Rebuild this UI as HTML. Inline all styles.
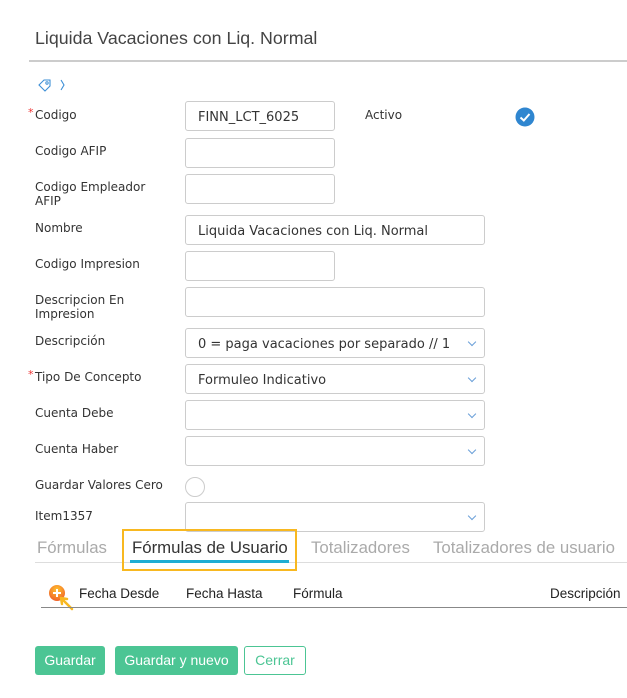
<!DOCTYPE html>
<html><head><meta charset="utf-8"><style>
body{margin:0;width:627px;height:698px;background:#fff;position:relative;overflow:hidden;font-family:"DejaVu Sans","Liberation Sans",sans-serif;color:#333}
.a{position:absolute}
.lbl{position:absolute;left:35px;font-size:12px;color:#333;line-height:14px}
.in{position:absolute;left:185px;height:28px;border:1px solid #ccc;border-radius:3px;background:#fff;font-size:13px;line-height:32px;padding-left:12px;box-sizing:content-box;color:#333}
.s{width:136px}.l{width:286px}
.chev{position:absolute;right:9px;top:10px;width:5px;height:5px;border-right:1.2px solid #6a9fd8;border-bottom:1.2px solid #6a9fd8;transform:rotate(45deg)}
.tab{position:absolute;top:538px;font-family:"Liberation Sans",sans-serif;font-size:16.8px;color:#aaa}
.th{position:absolute;top:586px;font-family:"Liberation Sans",sans-serif;font-size:13.5px;color:#222}
.btn{position:absolute;top:646px;height:29px;border-radius:3px;font-family:"Liberation Sans",sans-serif;font-size:14px;line-height:29px;text-align:center;color:#fff;background:#4cc594}
</style></head><body>
<div class="a" style="left:35px;top:28px;font-family:'Liberation Sans',sans-serif;font-size:17.8px;color:#444">Liquida Vacaciones con Liq. Normal</div>
<div class="a" style="left:29px;top:60px;width:598px;height:2px;background:#ccc"></div>
<svg class="a" style="left:36px;top:77px" width="30" height="16"><path d="M3 8 L8 3 L14 3 L14 9 L9 14 Z" fill="none" stroke="#3d8fd6" stroke-width="1.1"/><circle cx="11" cy="6" r="1.2" fill="none" stroke="#3d8fd6"/><path d="M25 3 L28 8 L25 13" fill="none" stroke="#3d8fd6" stroke-width="1.1"/></svg>
<div class="a" style="left:28px;top:106px;color:#e33;font-size:11px">*</div>
<div class="lbl" style="top:108px">Codigo</div>
<div class="in s" style="top:101px">FINN_LCT_6025</div>
<div class="a" style="left:365px;top:108px;font-size:12px">Activo</div>
<svg class="a" style="left:515px;top:107px" width="20" height="20"><circle cx="10" cy="10" r="9.5" fill="#2f86d0"/><path d="M5.5 10.5 L8.8 13.5 L14.5 7" fill="none" stroke="#fff" stroke-width="2"/></svg>
<div class="lbl" style="top:144px">Codigo AFIP</div>
<div class="in s" style="top:138px"></div>
<div class="lbl" style="top:180px">Codigo Empleador<br>AFIP</div>
<div class="in s" style="top:174px"></div>
<div class="lbl" style="top:221px">Nombre</div>
<div class="in l" style="top:215px">Liquida Vacaciones con Liq. Normal</div>
<div class="lbl" style="top:257px">Codigo Impresion</div>
<div class="in s" style="top:251px"></div>
<div class="lbl" style="top:293px">Descripcion En<br>Impresion</div>
<div class="in l" style="top:287px"></div>
<div class="lbl" style="top:334px">Descripción</div>
<div class="in l" style="top:328px;overflow:hidden;white-space:nowrap">0 = paga vacaciones por separado // 1<div class="chev"></div></div>
<div class="a" style="left:28px;top:368px;color:#e33;font-size:11px">*</div>
<div class="lbl" style="top:370px">Tipo De Concepto</div>
<div class="in l" style="top:364px">Formuleo Indicativo<div class="chev"></div></div>
<div class="lbl" style="top:406px">Cuenta Debe</div>
<div class="in l" style="top:400px"><div class="chev"></div></div>
<div class="lbl" style="top:442px">Cuenta Haber</div>
<div class="in l" style="top:436px"><div class="chev"></div></div>
<div class="lbl" style="top:478px">Guardar Valores Cero</div>
<div class="a" style="left:185px;top:477px;width:18px;height:18px;border:1px solid #ccc;border-radius:50%"></div>
<div class="lbl" style="top:509px">Item1357</div>
<div class="in l" style="top:502px"><div class="chev"></div></div>
<div class="a" style="left:35px;top:562px;width:592px;height:1px;background:#ddd"></div>
<div class="tab" style="left:37px">Fórmulas</div>
<div class="tab" style="left:132px;color:#333">Fórmulas de Usuario</div>
<div class="a" style="left:130px;top:560px;width:159px;height:3px;background:#1eadd3"></div>
<div class="a" style="left:122px;top:529px;width:171px;height:38px;border:2px solid #f8b820"></div>
<div class="tab" style="left:311px">Totalizadores</div>
<div class="tab" style="left:433px">Totalizadores de usuario</div>
<svg class="a" style="left:45px;top:582px" width="32" height="38"><defs><radialGradient id="g" cx="0.5" cy="0.3" r="0.7"><stop offset="0" stop-color="#ffc22e"/><stop offset="1" stop-color="#f0622a"/></radialGradient></defs><circle cx="12" cy="11" r="8" fill="url(#g)"/><path d="M12 7v8M8 11h8" stroke="#fff" stroke-width="2"/><path d="M18 18 L27 27 M16 16 L17 22 M16 16 L22 17" stroke="#f8b820" stroke-width="2.5" stroke-linecap="round" fill="none"/></svg>
<div class="th" style="left:79px">Fecha Desde</div>
<div class="th" style="left:186px">Fecha Hasta</div>
<div class="th" style="left:293px">Fórmula</div>
<div class="th" style="left:550px">Descripción</div>
<div class="a" style="left:41px;top:607px;width:586px;height:1px;background:#888"></div>
<div class="btn" style="left:35px;width:70px">Guardar</div>
<div class="btn" style="left:115px;width:123px">Guardar y nuevo</div>
<div class="btn" style="left:244px;width:60px;background:#fff;border:1px solid #4cc594;color:#4cc594;height:27px;line-height:27px">Cerrar</div>
</body></html>
